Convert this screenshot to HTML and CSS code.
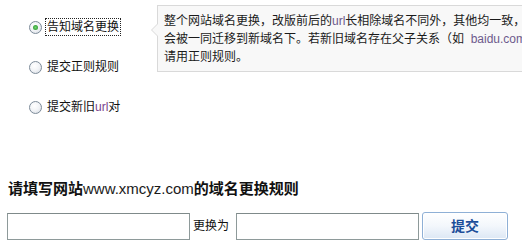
FILE: index.html
```html
<!DOCTYPE html>
<html lang="zh-CN">
<head>
<meta charset="utf-8">
<title>域名更换规则</title>
<link rel="stylesheet" href="styles.css">
</head>
<body>
<div class="page">
  <div class="top">
    <div class="options">
      <div class="opt"><span class="radio checked"></span><span class="label focus">告知域名更换</span></div>
      <div class="opt"><span class="radio"></span><span class="label">提交正则规则</span></div>
      <div class="opt"><span class="radio"></span><span class="label">提交新旧<span class="url">url</span>对</span></div>
    </div>
    <div class="tip">
      <div class="line">整个网站域名更换，改版前后的<span class="url">url</span>长相除域名不同外，其他均一致，</div>
      <div class="line">会被一同迁移到新域名下。若新旧域名存在父子关系（如&nbsp;&nbsp;<span class="url">baidu.com</span></div>
      <div class="line">请用正则规则。</div>
    </div>
  </div>
  <h2 class="title">请填写网站<span class="site">www.xmcyz.com</span>的域名更换规则</h2>
  <div class="form">
    <input class="field" type="text">
    <span class="to">更换为</span>
    <input class="field second" type="text">
    <button class="submit" type="button">提交</button>
  </div>
</div>
</body>
</html>
```
FILE: styles.css
```css
html, body {
  margin: 0;
  padding: 0;
  overflow: hidden;
  background: #fff;
}
body {
  font-family: "Liberation Sans", "Noto Sans CJK SC", sans-serif;
  font-size: 12px;
  color: #111;
}
.page {
  width: 522px;
  height: 251px;
  overflow: hidden;
}
.top {
  display: flex;
  align-items: flex-start;
}
.options {
  flex: 0 0 157px;
  box-sizing: border-box;
  padding: 19px 0 0 29px;
  display: flex;
  flex-direction: column;
  gap: 24px;
}
.opt {
  display: flex;
  align-items: center;
  height: 16px;
  line-height: 16px;
}
.radio {
  width: 11px;
  height: 11px;
  border-radius: 50%;
  border: 1px solid #7d8b99;
  background: radial-gradient(circle at 40% 35%, #ffffff 0%, #f1f3f6 50%, #d4d9e0 100%);
  margin-right: 4px;
  position: relative;
  flex-shrink: 0;
}
.radio.checked::after {
  content: "";
  position: absolute;
  left: 3px;
  top: 3px;
  width: 5px;
  height: 5px;
  border-radius: 50%;
  background: radial-gradient(circle, #6fd46f 0%, #2f9a2f 80%);
}
.label {
  padding: 0 1px;
}
.label.focus {
  outline: 1px dotted #222;
  outline-offset: 0;
}
.url {
  color: #7a3f8e;
}
.tip {
  flex: 0 0 auto;
  margin-top: 5px;
  width: 620px;
  box-sizing: border-box;
  padding: 6px 6px 5px 6px;
  background: #f8f8f8;
  border: 1px solid #d9d9d9;
  position: relative;
  white-space: nowrap;
  color: #1a1a1a;
}
.tip::before {
  content: "";
  position: absolute;
  left: -7px;
  top: 17px;
  border-style: solid;
  border-width: 7px 7px 7px 0;
  border-color: transparent #d9d9d9 transparent transparent;
}
.tip::after {
  content: "";
  position: absolute;
  left: -6px;
  top: 18px;
  border-style: solid;
  border-width: 6px 6px 6px 0;
  border-color: transparent #f8f8f8 transparent transparent;
}
.line {
  line-height: 18px;
  height: 18px;
}
.tip .url {
  color: #6d5a8c;
}
.title {
  margin: 64px 0 0 8px;
  font-size: 15px;
  line-height: 20px;
  font-weight: bold;
  color: #111;
}
.site {
  font-weight: normal;
  font-size: 15px;
  color: #1a1a1a;
}
.form {
  margin: 13px 0 0 7px;
  display: flex;
  align-items: center;
  height: 28px;
}
.field {
  width: 183px;
  height: 27px;
  box-sizing: border-box;
  margin: 0;
  border: 1px solid #8e9a9a;
  border-top-color: #7f8a8a;
  background: #fff;
  padding: 0 3px;
}
.to {
  margin: 0 7px 0 3px;
  line-height: 16px;
}
.submit {
  margin-left: 3px;
  width: 86px;
  height: 28px;
  box-sizing: border-box;
  border: 1px solid #8fb0d6;
  border-radius: 3px;
  background: linear-gradient(#ffffff 0%, #f3f7fc 50%, #dce7f4 100%);
  box-shadow: inset 0 0 0 1px #ffffff;
  font-family: "Liberation Sans", "Noto Sans CJK SC", sans-serif;
  font-size: 14px;
  font-weight: bold;
  color: #1c4e99;
  padding: 0;
  line-height: 24px;
}
```
